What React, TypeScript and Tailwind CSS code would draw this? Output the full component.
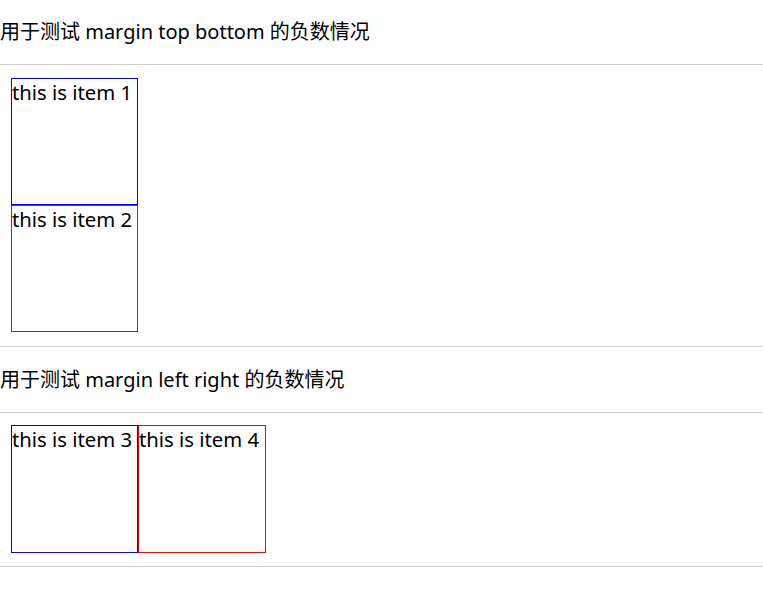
const font = { fontFamily: '"Noto Sans", "Noto Sans CJK SC", sans-serif' };

function Heading({ children, h }: { children: React.ReactNode; h: string }) {
    return (
        <div className={`${h} flex items-center text-[20px] leading-none text-black whitespace-nowrap`}>
            {children}
        </div>
    );
}

export default function App() {
    return (
        <div className="bg-white min-h-screen" style={font}>
            {/* vertical case */}
            <Heading h="h-16">用于测试 margin top bottom 的负数情况</Heading>
            <div className="h-px bg-[#d0d0d0]" />
            <div className="pt-[13px] pb-[14px] pl-[11px] flex flex-col">
                <div className="w-[127px] h-[127px] border border-solid border-[#0000ff] text-[20.3px] leading-[26px] text-black whitespace-nowrap">
                    this is item 1
                </div>
                <div className="w-[127px] h-[127px] border border-solid border-[#ff0000] text-[20.3px] leading-[26px] text-black whitespace-nowrap">
                    this is item 2
                </div>
            </div>
            <div className="h-px bg-[#d0d0d0]" />

            {/* horizontal case */}
            <Heading h="h-[65px]">用于测试 margin left right 的负数情况</Heading>
            <div className="h-px bg-[#d0d0d0]" />
            <div className="pt-[12px] pb-[13px] pl-[11px] flex">
                <div className="w-[127px] h-[128px] border border-solid border-[#0000ff] text-[20.3px] leading-[26px] text-black whitespace-nowrap">
                    this is item 3
                </div>
                <div className="w-[128px] h-[128px] border border-solid border-[#ff0000] text-[20.3px] leading-[26px] text-black whitespace-nowrap">
                    this is item 4
                </div>
            </div>
            <div className="h-px bg-[#d0d0d0]" />
        </div>
    );
}
